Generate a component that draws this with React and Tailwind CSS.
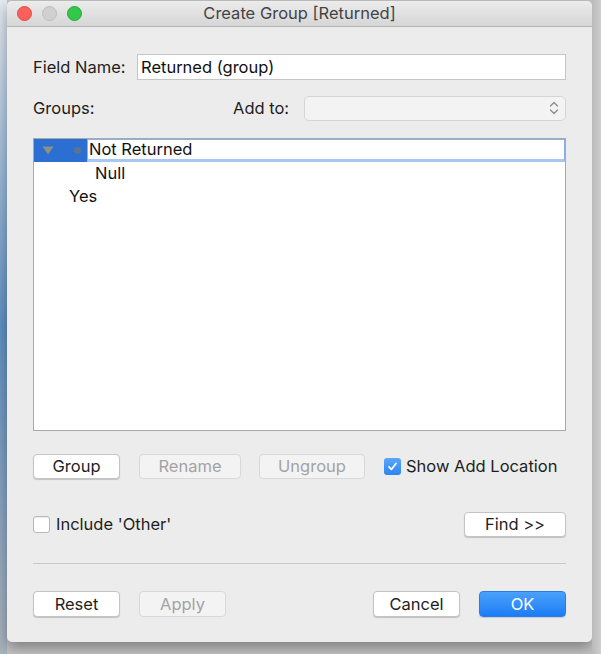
import React from 'react';

const Button = ({ children, className = '', disabled, primary }) => {
  let look = 'bg-white border-[#c4c4c4] text-[#1e1e1e] shadow-[0_1px_1px_rgba(0,0,0,0.18)]';
  if (disabled) look = 'bg-[#f3f3f3] border-[#d9d9d9] text-[#a3a3a3]';
  if (primary) look = 'bg-gradient-to-b from-[#4aa1fb] to-[#1a7cf5] border-[#2a7de8] text-white shadow-[0_1px_1px_rgba(0,0,0,0.15)]';
  return (
    <div className={`rounded-[4px] border flex items-center justify-center text-[16.5px] ${look} ${className}`}>
      {children}
    </div>
  );
};

const Checkbox = ({ checked }) =>
  checked ? (
    <div className="w-[17px] h-[17px] rounded-[3px] bg-gradient-to-b from-[#5aa7fb] to-[#2a84f2] flex items-center justify-center">
      <svg width="11" height="11" viewBox="0 0 11 11">
        <path d="M2 5.8 L4.4 8.4 L9 2.4" fill="none" stroke="white" strokeWidth="1.7" strokeLinecap="round" strokeLinejoin="round" />
      </svg>
    </div>
  ) : (
    <div className="w-[17px] h-[17px] rounded-[3px] bg-white border border-[#b8b8b8] shadow-[inset_0_1px_1px_rgba(0,0,0,0.08)]" />
  );

export default function App() {
  return (
    <div className="w-[601px] h-[654px] flex bg-[#c4c4c4] font-['Inter',sans-serif] overflow-hidden">
      <div className="w-[7px] h-full bg-gradient-to-b from-[#e4eaf0] via-[#5f90c2] to-[#aab4be]" />
      <div className="flex flex-col w-[585px]">
        <div className="h-[641px] mt-[1px] bg-[#ececec] rounded-t-[5px] rounded-b-[5px] shadow-[0_6px_14px_rgba(0,0,0,0.35)] flex flex-col overflow-hidden">
          {/* title bar */}
          <div className="h-[26px] bg-gradient-to-b from-[#ececec] to-[#d6d6d6] border-b border-[#b5b5b5] grid grid-cols-[1fr_auto_1fr] items-center">
            <div className="flex gap-[10px] pl-[10px]">
              <div className="w-[15px] h-[15px] rounded-full bg-[#fc605b] border border-[#de4a45]" />
              <div className="w-[15px] h-[15px] rounded-full bg-[#d0d0d0] border border-[#bdbdbd]" />
              <div className="w-[15px] h-[15px] rounded-full bg-[#34c84a] border border-[#28a83a]" />
            </div>
            <div className="text-[16.5px] text-[#444]">Create Group [Returned]</div>
            <div />
          </div>

          <div className="px-[26px] flex flex-col">
            {/* field name */}
            <div className="mt-[27px] h-[26px] flex items-center">
              <div className="w-[104px] text-[16.5px] text-[#1e1e1e]">Field Name:</div>
              <div className="flex-1 h-[26px] bg-white border border-[#c5c5c5] flex items-center pl-[3px] text-[16.5px] text-[#111]">
                Returned (group)
              </div>
            </div>

            {/* groups / add to */}
            <div className="mt-[15px] h-[26px] flex items-center">
              <div className="w-[200px] text-[16.5px] text-[#1e1e1e]">Groups:</div>
              <div className="w-[71px] text-[16.5px] text-[#1e1e1e]">Add to:</div>
              <div className="flex-1 h-[25px] rounded-[5px] bg-[#f3f3f3] border border-[#d5d5d5] flex items-center justify-end pr-[6px]">
                <svg width="10" height="16" viewBox="0 0 10 16">
                  <path d="M1.5 6 L5 2.5 L8.5 6 M1.5 10 L5 13.5 L8.5 10" fill="none" stroke="#8a8a8a" strokeWidth="1.3" strokeLinecap="round" strokeLinejoin="round" />
                </svg>
              </div>
            </div>

            {/* tree list */}
            <div className="mt-[17px] h-[293px] bg-white border border-[#a9a9a9] flex flex-col text-[16.5px] text-[#111]">
              <div className="h-[23px] flex">
                <div className="w-[53px] bg-[#2b6fd2] flex items-center">
                  <svg width="12" height="9" viewBox="0 0 12 9" className="ml-[8px]">
                    <path d="M0.5 0.5 L11.5 0.5 L6 8.5 Z" fill="#8c8f84" />
                  </svg>
                  <div className="ml-[20px] w-[7px] h-[7px] rounded-full bg-[#5a7396]" />
                </div>
                <div className="flex-1 bg-white border border-[#89b1e6] border-b-[3px] border-b-[#a7c9f1] flex items-center pl-[1px] leading-none">
                  Not Returned
                </div>
              </div>
              <div className="h-[23px] flex items-center pl-[61px]">Null</div>
              <div className="h-[23px] flex items-center pl-[35px]">Yes</div>
            </div>

            {/* action buttons */}
            <div className="mt-[23px] flex items-center">
              <Button className="w-[87px] h-[25px]">Group</Button>
              <Button disabled className="w-[102px] h-[25px] ml-[19px]">Rename</Button>
              <Button disabled className="w-[106px] h-[25px] ml-[18px]">Ungroup</Button>
              <div className="ml-[19px] flex items-center gap-[5px]">
                <Checkbox checked />
                <span className="text-[16.5px] text-[#1e1e1e]">Show Add Location</span>
              </div>
            </div>

            {/* include other / find */}
            <div className="mt-[33px] flex items-center">
              <Checkbox />
              <span className="ml-[6px] text-[16.5px] text-[#1e1e1e]">Include 'Other'</span>
              <div className="flex-1" />
              <Button className="w-[102px] h-[25px]">Find &gt;&gt;</Button>
            </div>

            {/* separator */}
            <div className="mt-[26px] h-px bg-[#c9c9c9]" />

            {/* dialog buttons */}
            <div className="mt-[27px] flex items-center">
              <Button className="w-[87px] h-[26px]">Reset</Button>
              <Button disabled className="w-[87px] h-[26px] ml-[19px]">Apply</Button>
              <div className="flex-1" />
              <Button className="w-[87px] h-[26px]">Cancel</Button>
              <Button primary className="w-[87px] h-[26px] ml-[19px]">OK</Button>
            </div>
          </div>
        </div>
      </div>
      <div className="flex-1 h-full bg-gradient-to-r from-[#b9b9b9] to-[#cfcfcf]" />
    </div>
  );
}
